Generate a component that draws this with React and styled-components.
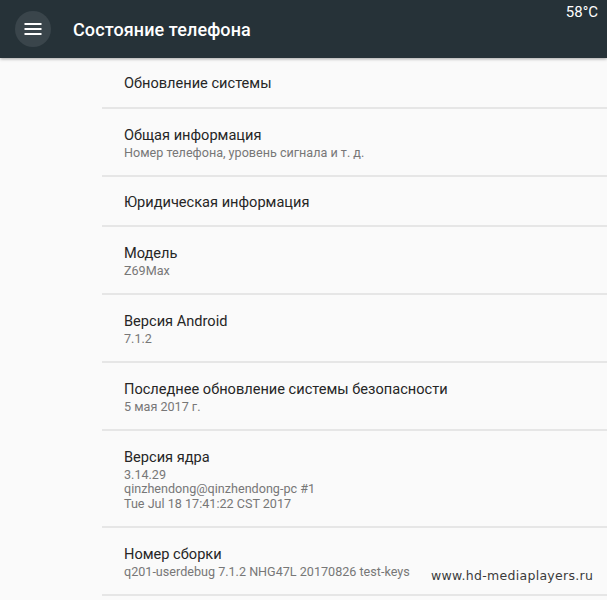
import React from 'react';
import styled, { createGlobalStyle } from 'styled-components';

const GlobalStyle = createGlobalStyle`
  html, body {
    margin: 0;
    padding: 0;
    background: #fafafa;
  }
  body {
    font-family: Roboto, 'Noto Sans', sans-serif;
  }
`;

const Screen = styled.div`
  position: relative;
  width: 607px;
  height: 600px;
  overflow: hidden;
  background: #fafafa;
`;

const Toolbar = styled.header`
  position: relative;
  display: flex;
  align-items: center;
  height: 58px;
  padding-left: 15px;
  background: #263238;
  box-shadow: 0 1px 3px rgba(0, 0, 0, 0.35);
  z-index: 1;
`;

const MenuButton = styled.div`
  display: flex;
  align-items: center;
  justify-content: center;
  width: 36px;
  height: 36px;
  border-radius: 50%;
  background: #3a454b;
`;

const Title = styled.h1`
  margin: 0 0 0 22px;
  font-size: 18px;
  font-weight: 500;
  color: #ffffff;
  letter-spacing: 0.1px;
`;

const Temp = styled.span`
  position: absolute;
  top: 3px;
  right: 9px;
  font-size: 15px;
  font-weight: 400;
  color: #ffffff;
`;

const List = styled.ul`
  list-style: none;
  margin: 0;
  padding: 0 0 0 102px;
`;

const Item = styled.li`
  display: flex;
  flex-direction: column;
  justify-content: center;
  min-height: ${(p) => p.$h}px;
  padding: 2px 0 0 22px;
  border-bottom: 2px solid #e6e6e6;
  box-sizing: border-box;
`;

const ItemTitle = styled.div`
  font-size: 14.6px;
  line-height: 19px;
  color: #262626;
`;

const Summary = styled.div`
  font-size: 12.6px;
  line-height: 14.5px;
  color: #777777;
  margin-top: 1px;
  white-space: pre-line;
`;

const Watermark = styled.span`
  position: absolute;
  left: 431px;
  top: 568px;
  font-family: 'DejaVu Sans', sans-serif;
  font-size: 12.5px;
  letter-spacing: 0.3px;
  white-space: nowrap;
  color: #3a3a3a;
`;

const MenuIcon = () => (
  <svg width="18" height="14" viewBox="0 0 18 14">
    <rect x="0.5" y="1" width="17" height="2" fill="#fff" />
    <rect x="0.5" y="6" width="17" height="2" fill="#fff" />
    <rect x="0.5" y="11" width="17" height="2" fill="#fff" />
  </svg>
);

const items = [
  { title: 'Обновление системы', h: 51 },
  { title: 'Общая информация', summary: 'Номер телефона, уровень сигнала и т. д.', h: 68 },
  { title: 'Юридическая информация', h: 50 },
  { title: 'Модель', summary: 'Z69Max', h: 68 },
  { title: 'Версия Android', summary: '7.1.2', h: 68 },
  { title: 'Последнее обновление системы безопасности', summary: '5 мая 2017 г.', h: 68 },
  {
    title: 'Версия ядра',
    summary: '3.14.29\nqinzhendong@qinzhendong-pc #1\nTue Jul 18 17:41:22 CST 2017',
    h: 97,
  },
  { title: 'Номер сборки', summary: 'q201-userdebug 7.1.2 NHG47L 20170826 test-keys', h: 68 },
];

const App = () => {
  return (
    <Screen>
      <GlobalStyle />
      <Toolbar>
        <MenuButton>
          <MenuIcon />
        </MenuButton>
        <Title>Состояние телефона</Title>
        <Temp>58°C</Temp>
      </Toolbar>
      <List>
        {items.map((it) => (
          <Item key={it.title} $h={it.h}>
            <ItemTitle>{it.title}</ItemTitle>
            {it.summary && <Summary>{it.summary}</Summary>}
          </Item>
        ))}
      </List>
      <Watermark>www.hd-mediaplayers.ru</Watermark>
    </Screen>
  );
};

export default App;
